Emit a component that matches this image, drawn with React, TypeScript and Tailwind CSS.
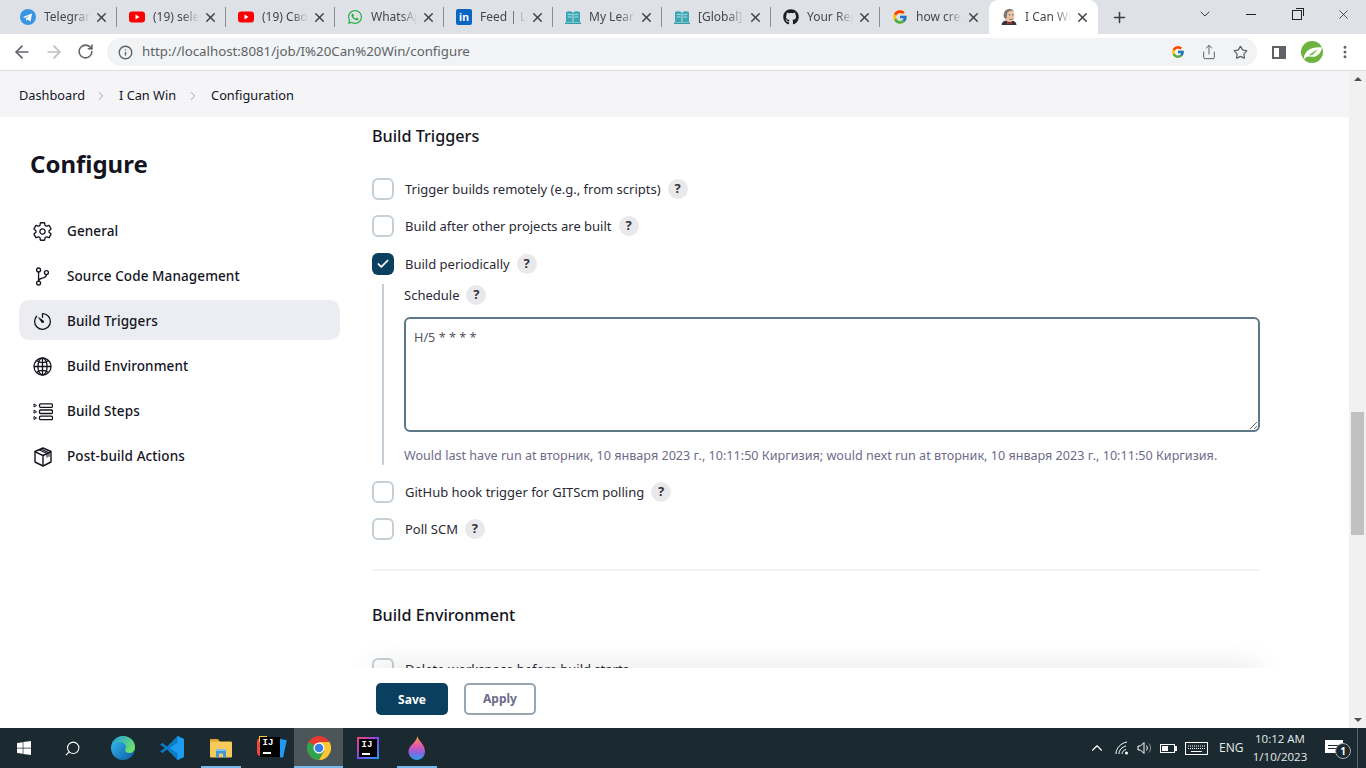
import { ReactNode } from "react";
import { ArrowLeft, ArrowRight, Check, ChevronDown, ChevronRight, ChevronUp, Info, MoreVertical, Plus, RotateCw, Search, Share, Star, X } from "lucide-react";
import { FaGithub, FaWhatsapp, FaWindows } from "react-icons/fa";
import { FcGoogle } from "react-icons/fc";
import { IoGitBranchOutline, IoGlobeOutline, IoSettingsOutline, IoTimerOutline } from "react-icons/io5";

const ui = "font-['Noto_Sans',sans-serif]";

function Telegram() {
  return (
    <svg viewBox="0 0 16 16" className="w-4 h-4">
      <circle cx="8" cy="8" r="8" fill="#3a94e4" />
      <path d="M3 8l9-3.6-1.5 8-2.8-2-1.4 1.4-.3-2.4 4-3.4-5 3z" fill="#fff" />
    </svg>
  );
}

function Youtube() {
  return (
    <svg viewBox="0 0 16 16" className="w-4 h-4">
      <rect y="2.5" width="16" height="11" rx="3" fill="#f00" />
      <path d="M6.5 5.5l4 2.5-4 2.5z" fill="#fff" />
    </svg>
  );
}

function Linkedin() {
  return (
    <div className="w-4 h-4 rounded-[2px] bg-[#0a66c2] flex items-center justify-center text-white text-[11px] font-bold leading-none font-['Liberation_Sans',sans-serif]">
      in
    </div>
  );
}

function Book() {
  return (
    <svg viewBox="0 0 16 16" className="w-4 h-4">
      <path d="M0 13.5h16V15H0z" fill="#2d9cab" />
      <path d="M1 3c2.500-1 5-.8 7 .5 2-1.300 4.500-1.500 7-.5v10H1z" fill="#3ba7b5" />
      <path d="M8 3.500V13M2.800 5.500c1.500-.3 2.700-.2 3.800.3M2.800 8c1.500-.3 2.700-.2 3.800.3M9.400 5.800c1.100-.5 2.300-.6 3.800-.3M9.400 8.300c1.100-.5 2.300-.6 3.800-.3" stroke="#d9f0f3" strokeWidth=".8" fill="none" />
    </svg>
  );
}

function Jenkins() {
  return (
    <svg viewBox="0 0 16 16" className="w-4 h-4">
      <path d="M0.500 16c.2-3 2.500-4.800 7.500-4.800s7.300 1.800 7.500 4.800z" fill="#2f3640" />
      <path d="M3 8C2 3 5 0 8.500 0c3 0 5 2 4.800 5.500v3.500c-.5 2.500-2.500 4-4.800 4-2.500 0-4.500-1.500-5.500-5z" fill="#e9c3a6" />
      <path d="M3 8.500C1.800 3.500 4.500 0 8.500 0c2 0 3.500.8 4.200 2C10.500 1.400 8 1.800 6.500 3.500 5.800 5 6 7 5.500 9.500 4.500 9.800 3.500 9.500 3 8.500z" fill="#7b7774" />
      <circle cx="8.500" cy="5.800" r=".6" fill="#2a2a2a" />
      <circle cx="11.800" cy="5.800" r=".6" fill="#2a2a2a" />
      <path d="M8 10c1.200.6 2.600.6 4-.2" stroke="#8a5a40" strokeWidth=".7" fill="none" />
      <path d="M5.800 12.800l2.400 1.200 2.400-1.200v2.600l-2.400-1-2.400 1z" fill="#d0302a" />
    </svg>
  );
}

function SpringLogo() {
  return (
    <svg viewBox="0 0 22 22" className="w-[22px] h-[22px]">
      <circle cx="11" cy="11" r="11" fill="#6db33f" />
      <path d="M2.500 19C3 10 10 5.500 21 6.500 20 13 15 17 9 15.500c-2.500-.5-4.500.5-6.500 3.500z" fill="#fff" />
      <path d="M8 14c3-3 6-4.800 10-5.800-2 .2-3.500 3.500-6 5.500-1.500 1-3 .8-4 .3z" fill="#8cc665" />
    </svg>
  );
}

const tabs: { icon: ReactNode; title: string; active?: boolean }[] = [
  { icon: <Telegram />, title: "Telegram" },
  { icon: <Youtube />, title: "(19) selenium" },
  { icon: <Youtube />, title: "(19) Своя игра" },
  { icon: <FaWhatsapp className="w-4 h-4 text-[#25b042]" />, title: "WhatsApp" },
  { icon: <Linkedin />, title: "Feed | LinkedIn" },
  { icon: <Book />, title: "My Learning" },
  { icon: <Book />, title: "[Global] course" },
  { icon: <FaGithub className="w-4 h-4 text-[#1b1f23]" />, title: "Your Repositories" },
  { icon: <FcGoogle className="w-4 h-4" />, title: "how create job" },
  { icon: <Jenkins />, title: "I Can Win", active: true },
];

function Tab({ icon, title, active, divider }: { icon: ReactNode; title: string; active?: boolean; divider: boolean }) {
  return (
    <div className={`w-[109px] h-[34px] shrink-0 flex items-center pl-3 ${active ? "bg-white rounded-t-[9px]" : ""}`}>
      {icon}
      <span className="ml-2 w-[46px] overflow-hidden whitespace-nowrap text-xs text-[#45474a] [mask-image:linear-gradient(to_right,black_65%,transparent)]">
        {title}
      </span>
      <X className="ml-[4px] w-[15px] h-[15px] text-[#45474a]" strokeWidth={2.5} />
      {divider && <div className="ml-[7px] w-px h-5 bg-[#8a8d91]" />}
    </div>
  );
}

function TabStrip() {
  return (
    <div className="h-[34px] bg-[#dee1e6] flex pl-2 items-stretch">
      {tabs.map((tab, i) => (
        <Tab key={i} icon={tab.icon} title={tab.title} active={tab.active} divider={i < 8} />
      ))}
      <div className="w-[42px] flex items-center justify-center">
        <Plus className="w-[17px] h-[17px] text-[#3c4043]" strokeWidth={2.2} />
      </div>
      <div className="ml-auto flex items-center">
        <div className="w-[46px] flex justify-center pb-[6px]">
          <ChevronDown className="w-4 h-4 text-[#3c4043]" strokeWidth={1.500} />
        </div>
        <div className="w-[46px] flex justify-center pb-[6px]">
          <div className="w-[10px] h-px bg-[#222]" />
        </div>
        <div className="w-[46px] flex justify-center pb-[6px]">
          <div className="relative w-[10px] h-[10px] mt-[1px] border border-[#222]">
            <div className="absolute -top-[3px] -right-[3px] w-[8px] h-[8px] border-t border-r border-[#222]" />
          </div>
        </div>
        <div className="w-[46px] flex justify-center pb-[6px]">
          <X className="w-[15px] h-[15px] text-[#222]" strokeWidth={1.200} />
        </div>
      </div>
    </div>
  );
}

function Toolbar() {
  return (
    <div className="h-[37px] bg-white border-b border-[#dadce0] flex items-start pt-1 pl-[12px]">
      <ArrowLeft className="mt-[4px] w-5 h-5 text-[#5f6368]" strokeWidth={2} />
      <ArrowRight className="mt-[4px] ml-[12px] w-5 h-5 text-[#babcbe]" strokeWidth={2} />
      <RotateCw className="mt-[5px] ml-[13px] w-[17px] h-[17px] text-[#5f6368]" strokeWidth={2.2} />
      <div className="ml-[13px] w-[1150px] h-[28px] rounded-full bg-[#f1f3f4] flex items-center pl-[11px] pr-[9px]">
        <Info className="w-[15px] h-[15px] text-[#5f6368]" strokeWidth={2.2} />
        <span className="ml-[9px] text-[13.250px] text-[#5f6368]">http://localhost:8081/job/I%20Can%20Win/configure</span>
        <FcGoogle className="ml-auto w-[14px] h-[14px]" />
        <Share className="ml-[16px] w-[16px] h-[16px] text-[#5f6368]" strokeWidth={1.500} />
        <Star className="ml-[16px] w-[15px] h-[15px] text-[#5f6368]" strokeWidth={2} />
      </div>
      <div className="ml-[15px] mt-[8px] w-[14px] h-[13px] border-2 border-[#5f6368] flex justify-end">
        <div className="w-[5px] h-full bg-[#5f6368]" />
      </div>
      <div className="ml-[15px] mt-[3px]">
        <SpringLogo />
      </div>
      <MoreVertical className="ml-[14px] mt-[6px] w-4 h-4 text-[#5f6368]" strokeWidth={2.5} />
    </div>
  );
}

function Breadcrumb() {
  return (
    <div className="h-[46px] shrink-0 bg-[#f5f5f7] flex items-center pl-[19px] pt-1 text-[12.750px] text-[#14141f]">
      <span>Dashboard</span>
      <ChevronRight className="ml-[9px] mr-[11px] w-[14px] h-[14px] text-[#9a9aa8]" strokeWidth={1.500} />
      <span>I Can Win</span>
      <ChevronRight className="ml-[10px] mr-[11px] w-[14px] h-[14px] text-[#9a9aa8]" strokeWidth={1.500} />
      <span>Configuration</span>
    </div>
  );
}

function StepsIcon() {
  return (
    <svg viewBox="0 0 20 20" className="w-5 h-5" fill="none" stroke="#14141f" strokeWidth="1.300">
      <rect x="6.500" y="1.800" width="13" height="3.500" rx="1.200" />
      <rect x="6.500" y="8" width="13" height="3.500" rx="1.200" />
      <rect x="6.500" y="14.200" width="13" height="3.500" rx="1.200" />
      <path d="M1 2l2.500 1.500L1 5zM1 8.200l2.500 1.500L1 11.200zM1 14.500l2.500 1.500L1 17.500z" strokeWidth="1" />
    </svg>
  );
}

function BoxIcon() {
  return (
    <svg viewBox="0 0 20 20" className="w-5 h-5" fill="none" stroke="#14141f" strokeWidth="1.400" strokeLinejoin="round">
      <path d="M10 1l8 3.500v10.500L10 19l-8-4V4.500z" />
      <path d="M2.200 4.800L10 8.500l7.800-3.700M10 8.500V19" />
      <path d="M6 2.800l8 3.800v4M8 2l8 3.800v4" strokeWidth="1.100" />
    </svg>
  );
}

const navItems: { label: string; icon: ReactNode; active?: boolean }[] = [
  { label: "General", icon: <IoSettingsOutline className="w-[21px] h-[21px]" /> },
  { label: "Source Code Management", icon: <IoGitBranchOutline className="w-[21px] h-[21px]" /> },
  { label: "Build Triggers", icon: <IoTimerOutline className="w-[21px] h-[21px]" />, active: true },
  { label: "Build Environment", icon: <IoGlobeOutline className="w-[21px] h-[21px]" /> },
  { label: "Build Steps", icon: <StepsIcon /> },
  { label: "Post-build Actions", icon: <BoxIcon /> },
];

function Sidebar() {
  return (
    <aside className="w-[372px] shrink-0 pl-[19px] pr-[32px] pt-[29px]">
      <h1 className="pl-[11px] text-2xl leading-9 font-bold text-[#14141f]">Configure</h1>
      <nav className="mt-[28px] flex flex-col gap-[5px]">
        {navItems.map((item) => (
          <div
            key={item.label}
            className={`h-10 flex items-center pl-[13px] pt-[3px] rounded-[10px] text-[#14141f] ${item.active ? "bg-[#ecedf2]" : ""}`}
          >
            <span className="w-[21px] flex justify-center">{item.icon}</span>
            <span className="ml-[14px] text-[13.500px] font-medium tracking-[0.1px]">{item.label}</span>
          </div>
        ))}
      </nav>
    </aside>
  );
}

function Help() {
  return (
    <span className="ml-[7px] w-5 h-5 rounded-full bg-[#e9e9eb] flex items-center justify-center text-[13px] font-bold text-[#33333f]">?</span>
  );
}

function Checkbox({ checked }: { checked?: boolean }) {
  if (checked) {
    return (
      <span className="w-[22px] h-[22px] shrink-0 rounded-md bg-[#0b3f5f] flex items-center justify-center">
        <Check className="w-[14px] h-[14px] text-white" strokeWidth={3} />
      </span>
    );
  }
  return <span className="w-[22px] h-[22px] shrink-0 rounded-md border-2 border-[#c5d0d6] bg-white" />;
}

function Row({ label, checked, help = true, className = "" }: { label: string; checked?: boolean; help?: boolean; className?: string }) {
  return (
    <div className={`h-[22px] flex items-center ${className}`}>
      <Checkbox checked={checked} />
      <span className="ml-[11px] pt-0.5 text-[13px] text-[#2a2a36]">{label}</span>
      {help && <Help />}
    </div>
  );
}

function ConfigForm() {
  return (
    <div className="w-[887px] shrink-0 pt-[6px]">
      <h2 className="text-[16.200px] leading-[26px] font-medium text-[#14141f]">Build Triggers</h2>
      <Row label="Trigger builds remotely (e.g., from scripts)" className="mt-[29px]" />
      <Row label="Build after other projects are built" className="mt-[15px]" />
      <Row label="Build periodically" checked className="mt-[16px]" />
      <div className="ml-[10px] mt-[9px] w-[877px] h-[181px] border-l-2 border-[#c5d0d6] pl-5">
        <div className="h-[22px] flex items-center">
          <span className="pt-0.5 text-[13px] text-[#2a2a36]">Schedule</span>
          <Help />
        </div>
        <textarea
          readOnly
          defaultValue="H/5 * * * *"
          className="mt-[11px] block w-[856px] h-[115px] rounded-md border-2 border-[#5c7889] bg-white px-2 py-2 text-[12.700px] leading-5 text-[#55555f] outline-none"
        />
        <p className="mt-[14px] text-[12.600px] leading-5 text-[#6d6b8a] whitespace-nowrap">
          Would last have run at вторник, 10 января 2023 г., 10:11:50 Киргизия; would next run at вторник, 10 января 2023 г., 10:11:50 Киргизия.
        </p>
      </div>
      <Row label="GitHub hook trigger for GITScm polling" className="mt-[16px]" />
      <Row label="Poll SCM" className="mt-[15px]" />
      <div className="mt-[29px] h-0.5 bg-[#f3f3f6]" />
      <h2 className="mt-[31px] text-[16.200px] leading-[26px] font-medium text-[#14141f]">Build Environment</h2>
      <Row label="Delete workspace before build starts" help={false} className="mt-[30px]" />
    </div>
  );
}

function BottomBar() {
  return (
    <div className="h-[60px] shrink-0 bg-white flex items-start pt-[15px] pl-[376px] gap-4">
      <button className="w-[72px] h-8 rounded-[5px] bg-[#0b3f5f] pt-px text-white text-xs font-bold">Save</button>
      <button className="w-[72px] h-8 rounded-[5px] border-2 border-[#98a6b2] bg-white text-[#6d6b8a] text-xs font-bold">Apply</button>
    </div>
  );
}

function Scrollbar() {
  return (
    <div className="w-[17px] shrink-0 bg-[#f1f1f1] flex flex-col items-center">
      <div className="mt-[6px] w-0 h-0 border-x-[4px] border-x-transparent border-b-[4px] border-b-[#505050]" />
      <div className="mt-[331px] w-[13px] h-[123px] bg-[#c1c1c1]" />
      <div className="mt-auto mb-[6px] w-0 h-0 border-x-[4px] border-x-transparent border-t-[4px] border-t-[#505050]" />
    </div>
  );
}

function EdgeIcon() {
  return (
    <svg viewBox="0 0 24 24" className="w-6 h-6">
      <defs>
        <linearGradient id="edgeA" x1="0" y1="0" x2="1" y2="1">
          <stop offset="0" stopColor="#35c1f1" />
          <stop offset="1" stopColor="#0c59a4" />
        </linearGradient>
        <linearGradient id="edgeB" x1="0" y1="0" x2="1" y2="0.6">
          <stop offset="0" stopColor="#1b9de2" />
          <stop offset="1" stopColor="#6fe06a" />
        </linearGradient>
      </defs>
      <circle cx="12" cy="12" r="12" fill="url(#edgeA)" />
      <path d="M1 9C3 3 8 0 12 0c7 0 12 5 12 11 0 4-3 6-6 6-2 0-4-1-4-3 0-1 1-1.500 1-3 0-3-3-5-6-5-4 0-7 1-8 3z" fill="url(#edgeB)" />
    </svg>
  );
}

function VsCodeIcon() {
  return (
    <svg viewBox="0 0 24 24" className="w-6 h-6">
      <path d="M17.500 0L24 3v18l-6.500 3L7 13.500 2.500 17 0 15.500 5 12 0 8.500 2.500 7 7 10.500z" fill="#0a7cc5" />
      <path d="M17.500 0L24 3v18l-6.500 3zM17.500 6.500L10 12l7.500 5.500z" fill="#1f9cf0" fillRule="evenodd" />
    </svg>
  );
}

function FolderIcon() {
  return (
    <svg viewBox="0 0 24 24" className="w-6 h-6">
      <path d="M1 3h8l2 3H1z" fill="#e0a526" />
      <rect x="1" y="5.500" width="22" height="16" rx="1" fill="#f6c95a" />
      <path d="M7 21.500v-7h10v7h-3v-4h-4v4z" fill="#3a9bd8" />
      <rect x="7" y="13" width="10" height="2" fill="#7cc4ee" />
    </svg>
  );
}

function IdeaIcon({ variant }: { variant: "toolbox" | "plain" }) {
  if (variant === "toolbox") {
    return (
      <div className="relative w-6 h-6">
        <div className="absolute -left-[1px] top-[2px] w-[8px] h-[18px] bg-[#f0473e] rounded-sm" />
        <div className="absolute left-[1px] top-0 w-[8px] h-[6px] bg-[#fcc934]" />
        <div className="absolute -right-[3px] top-[3px] w-[10px] h-[18px] bg-[#1f9cf0] rotate-12" />
        <div className="absolute left-[2px] top-[1px] w-[20px] h-[20px] bg-black flex flex-col pl-[3px] pt-[2px] text-white text-[9px] font-bold leading-none font-['Liberation_Mono',monospace]">
          IJ
          <div className="mt-[4px] w-2 h-[2px] bg-white" />
        </div>
      </div>
    );
  }
  return (
    <div className="w-[22px] h-[22px] p-[2px] bg-[linear-gradient(135deg,#fc3f74,#7a4df0_50%,#1f9cf0)]">
      <div className="w-full h-full bg-black flex flex-col pl-[3px] pt-[2px] text-white text-[9px] font-bold leading-none font-['Liberation_Mono',monospace]">
        IJ
        <div className="mt-[3px] w-2 h-[2px] bg-white" />
      </div>
    </div>
  );
}

function ChromeIcon() {
  return (
    <svg viewBox="0 0 24 24" className="w-6 h-6">
      <circle cx="12" cy="12" r="12" fill="#e33b2e" />
      <path d="M12 12L1.600 6A12 12 0 0 0 12 24l5.200-9z" fill="#2fa34e" />
      <path d="M12 6h10.400A12 12 0 0 1 12 24l5.200-9z" fill="#fcc934" />
      <circle cx="12" cy="12" r="5.500" fill="#fff" />
      <circle cx="12" cy="12" r="4.300" fill="#3a7de8" />
    </svg>
  );
}

function DropIcon() {
  return (
    <svg viewBox="0 0 24 24" className="w-6 h-6">
      <defs>
        <linearGradient id="dropA" x1="0" y1="0" x2="0" y2="1">
          <stop offset="0" stopColor="#f2a03a" />
          <stop offset=".4" stopColor="#e25aa8" />
          <stop offset=".7" stopColor="#8a63e0" />
          <stop offset="1" stopColor="#21a5e8" />
        </linearGradient>
      </defs>
      <path d="M12.500 0C13 5 20 8 20 15.500 20 20 16.500 24 12 24S3.500 20 3.500 15.500C3.500 9.500 11 7 12.500 0z" fill="url(#dropA)" />
    </svg>
  );
}

function KeyboardIcon() {
  return (
    <svg viewBox="0 0 23 13" className="ml-[10px] w-[23px] h-[13px]" fill="none" stroke="#fff" strokeWidth="1">
      <rect x=".5" y=".5" width="22" height="12" />
      <path d="M3 4h17M3 6.500h17" strokeDasharray="1 1" />
      <path d="M6 9.500h11" />
    </svg>
  );
}

const taskApps: { icon: ReactNode; running?: boolean; active?: boolean }[] = [
  { icon: <EdgeIcon /> },
  { icon: <VsCodeIcon /> },
  { icon: <FolderIcon />, running: true },
  { icon: <IdeaIcon variant="toolbox" /> },
  { icon: <ChromeIcon />, running: true, active: true },
  { icon: <IdeaIcon variant="plain" /> },
  { icon: <DropIcon />, running: true },
];

function Taskbar() {
  return (
    <div className="h-10 bg-[#1a2a30] flex items-stretch text-white font-['Open_Sans',sans-serif]">
      <div className="w-12 flex items-center justify-center">
        <FaWindows className="w-4 h-4" />
      </div>
      <div className="w-[49px] flex items-center justify-center">
        <Search className="w-[17px] h-[17px] -scale-x-100" strokeWidth={1.500} />
      </div>
      <div className="w-px" />
      {taskApps.map((app, i) => (
        <div key={i} className={`w-[49px] flex flex-col items-center justify-center relative ${app.active ? "bg-[#4a565a]" : ""}`}>
          {app.icon}
          {app.running && <div className={`absolute bottom-0 h-0.5 bg-[#76b9ed] ${app.active ? "w-full" : "w-10"}`} />}
        </div>
      ))}
      <div className="ml-auto flex items-center pr-[8px]">
        <ChevronUp className="w-[18px] h-[18px]" strokeWidth={1.500} />
        <svg viewBox="0 0 14 14" className="ml-[9px] w-[14px] h-[14px]" fill="none" stroke="#fff" strokeWidth="1">
          <path d="M1 13C1 7 6 2 12 1M4 13c0-4 3-7 7-8M7 13c0-2 1.500-4 4-4.500" />
          <circle cx="11.500" cy="12" r="1.500" fill="#fff" stroke="none" />
        </svg>
        <svg viewBox="0 0 16 14" className="ml-[8px] w-4 h-[14px]" fill="none" stroke="#fff" strokeWidth="1">
          <path d="M1 5h2.500L7 1.500v11L3.500 9H1zM9.500 4.500c1 1.500 1 3.500 0 5" />
          <path d="M12 2.500c2 2.500 2 6.500 0 9" stroke="#8a9599" />
        </svg>
        <div className="ml-[7px] w-[15px] h-[9px] border border-white flex p-[1px] relative">
          <div className="w-[6px] bg-white" />
          <div className="absolute -right-[3px] top-[1px] w-[2px] h-[5px] bg-white" />
        </div>
        <KeyboardIcon />
        <span className="ml-[11px] w-[24px] text-xs text-[#e8eaeb]">ENG</span>
        <div className="ml-[7px] w-[60px] text-center text-[11.500px] leading-[18px] text-[#e8eaeb]">
          <div>10:12 AM</div>
          <div>1/10/2023</div>
        </div>
        <div className="ml-[15px] relative w-[18px] h-[16px]">
          <div className="w-full h-[13px] bg-white flex flex-col justify-center gap-[2px] px-[3px]">
            <div className="h-px bg-[#1a2a30]" />
            <div className="h-px bg-[#1a2a30]" />
          </div>
          <div className="absolute -right-2 top-[3px] w-4 h-4 rounded-full bg-[#1a2a30] border border-[#aaa] flex items-center justify-center text-[10px] font-bold leading-none">1</div>
        </div>
        <div className="ml-[14px] w-px h-10 bg-[#5a6a70]" />
      </div>
    </div>
  );
}

export default function App() {
  return (
    <div className={`w-[1366px] h-[768px] overflow-hidden flex flex-col bg-white ${ui}`}>
      <TabStrip />
      <Toolbar />
      <div className="h-[657px] flex">
        <div className="flex-1 min-w-0 flex flex-col">
          <Breadcrumb />
          <div className="relative flex-1 min-h-0 flex overflow-hidden">
            <Sidebar />
            <ConfigForm />
            {/* soft shadow the sticky bar throws up over the form */}
            <div className="absolute left-[372px] bottom-[-20px] w-[887px] h-5 shadow-[0_0_30px_rgba(0,0,0,0.12)]" />
          </div>
          <BottomBar />
        </div>
        <Scrollbar />
      </div>
      <Taskbar />
    </div>
  );
}
